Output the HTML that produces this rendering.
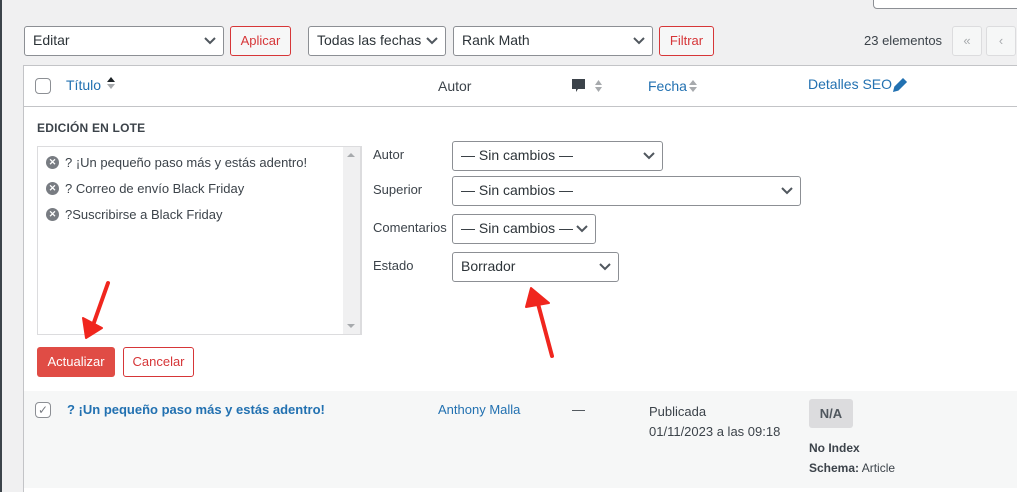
<!DOCTYPE html>
<html><head><meta charset="utf-8"><style>
*{box-sizing:border-box;margin:0;padding:0}
html,body{width:1017px;height:492px;overflow:hidden}
body{background:#f0f0f1;font-family:"Liberation Sans",sans-serif;font-size:13px;color:#3c434a;position:relative}
.a{position:absolute}
.sel{position:absolute;background:#fff;border:1px solid #8c8f94;border-radius:3px;font-size:14px;color:#2c3338;padding:0 0 0 8px;line-height:27px;white-space:nowrap}
.sel svg{position:absolute;right:7px;top:10px}
.btn{position:absolute;border:1px solid #d63638;border-radius:3px;color:#d63638;background:#f6f7f7;font-size:13px;text-align:center;line-height:27px}
.blue{color:#2271b1}
.it{display:flex;align-items:center;height:26px}
.x{display:inline-block;width:13px;height:13px;border-radius:50%;background:#787c82;color:#fff;font-size:9px;line-height:13px;text-align:center;font-weight:bold;margin-right:6px}
</style></head><body>
<div class="a" style="left:0;top:0;width:2px;height:492px;background:#3c434a"></div>
<div class="a" style="left:873px;top:-5px;width:150px;height:14px;background:#fff;border:1px solid #8c8f94;border-radius:4px"></div>

<div class="sel" style="left:24px;top:26px;width:200px;height:30px">Editar<svg width="12" height="8"><path d="M1 1l5 5 5-5" stroke="#50575e" stroke-width="2" fill="none"/></svg></div>
<div class="btn" style="left:230px;top:26px;width:61px;height:30px">Aplicar</div>
<div class="sel" style="left:308px;top:26px;width:138px;height:30px">Todas las fechas<svg width="12" height="8"><path d="M1 1l5 5 5-5" stroke="#50575e" stroke-width="2" fill="none"/></svg></div>
<div class="sel" style="left:453px;top:26px;width:200px;height:30px">Rank Math<svg width="12" height="8"><path d="M1 1l5 5 5-5" stroke="#50575e" stroke-width="2" fill="none"/></svg></div>
<div class="btn" style="left:659px;top:26px;width:55px;height:30px">Filtrar</div>
<div class="a" style="left:864px;top:33px;font-size:13px;color:#3c434a">23 elementos</div>
<div class="a" style="left:952px;top:26px;width:30px;height:30px;border:1px solid #dcdcde;border-radius:3px;background:#f6f7f7;color:#a7aaad;text-align:center;line-height:28px">«</div>
<div class="a" style="left:986px;top:26px;width:30px;height:30px;border:1px solid #dcdcde;border-radius:3px;background:#f6f7f7;color:#a7aaad;text-align:center;line-height:28px">‹</div>

<div class="a" style="left:23px;top:65px;width:994px;height:427px;background:#fff;border:1px solid #c3c4c7;border-bottom:none;border-right:none"></div>
<div class="a" style="left:24px;top:106px;width:993px;height:1px;background:#c3c4c7"></div>
<div class="a" style="left:35px;top:78px;width:16px;height:16px;border:1px solid #8c8f94;border-radius:4px;background:#fff"></div>
<div class="a blue" style="left:66px;top:77px;font-size:14px">Título</div>
<svg class="a" style="left:106px;top:76px" width="10" height="14"><path d="M1 6L5 1 9 6z" fill="#1d2327"/><path d="M1 8L5 13 9 8z" fill="#a7aaad"/></svg>
<div class="a" style="left:438px;top:78px;font-size:14px">Autor</div>
<svg class="a" style="left:571px;top:78px" width="32" height="16"><path d="M1 1h13v10H7l-2 3v-3H1z" fill="#3c434a"/><path d="M24 7L27.5 2 31 7z" fill="#a7aaad"/><path d="M24 9L27.5 14 31 9z" fill="#a7aaad"/></svg>
<div class="a blue" style="left:648px;top:78px;font-size:14px">Fecha</div>
<svg class="a" style="left:688px;top:78px" width="10" height="16"><path d="M1 7L5 2 9 7z" fill="#a7aaad"/><path d="M1 9L5 14 9 9z" fill="#a7aaad"/></svg>
<div class="a blue" style="left:808px;top:76px;font-size:14px">Detalles SEO</div>
<svg class="a" style="left:892px;top:77px" width="16" height="16"><path d="M2 14l1-4 8-8 3 3-8 8z" fill="#2271b1" stroke="#2271b1" stroke-width="1.5"/></svg>

<div class="a" style="left:37px;top:121px;font-size:12px;font-weight:bold;color:#3c434a;letter-spacing:.2px">EDICIÓN EN LOTE</div>
<div class="a" style="left:37px;top:146px;width:324px;height:189px;border:1px solid #dcdcde;background:#fff"></div>
<div class="a" style="left:343px;top:147px;width:17px;height:187px;background:#f0f0f1"></div>
<svg class="a" style="left:346px;top:151px" width="10" height="180"><path d="M1 6L5 2 9 6z" fill="#a7aaad"/><path d="M1 173L5 177 9 173z" fill="#a7aaad"/></svg>
<div class="a" style="left:46px;top:149px;font-size:13px;color:#3c434a">
<div class="it"><span class="x">✕</span>? ¡Un pequeño paso más y estás adentro!</div>
<div class="it"><span class="x">✕</span>? Correo de envío Black Friday</div>
<div class="it"><span class="x">✕</span>?Suscribirse a Black Friday</div>
</div>
<div class="a" style="left:361px;top:146px;width:1px;height:189px;background:#dcdcde"></div>
<div class="a" style="left:373px;top:147px">Autor</div>
<div class="a" style="left:373px;top:182px">Superior</div>
<div class="a" style="left:373px;top:220px">Comentarios</div>
<div class="a" style="left:373px;top:258px">Estado</div>
<div class="sel" style="left:452px;top:141px;width:211px;height:30px">— Sin cambios —<svg width="12" height="8"><path d="M1 1l5 5 5-5" stroke="#50575e" stroke-width="2" fill="none"/></svg></div>
<div class="sel" style="left:452px;top:176px;width:349px;height:30px">— Sin cambios —<svg width="12" height="8"><path d="M1 1l5 5 5-5" stroke="#50575e" stroke-width="2" fill="none"/></svg></div>
<div class="sel" style="left:452px;top:214px;width:144px;height:30px">— Sin cambios —<svg width="12" height="8"><path d="M1 1l5 5 5-5" stroke="#50575e" stroke-width="2" fill="none"/></svg></div>
<div class="sel" style="left:452px;top:252px;width:167px;height:30px">Borrador<svg width="12" height="8"><path d="M1 1l5 5 5-5" stroke="#50575e" stroke-width="2" fill="none"/></svg></div>
<div class="a" style="left:37px;top:347px;width:78px;height:30px;background:#e04c45;border-radius:3px;color:#fff;text-align:center;line-height:30px">Actualizar</div>
<div class="btn" style="left:123px;top:347px;width:71px;height:30px;background:#fff">Cancelar</div>

<svg class="a" style="left:0;top:0" width="1017" height="492">
<path d="M108 283 L92 328" stroke="#f0261e" stroke-width="4" stroke-linecap="round"/>
<path d="M83 318 L86 338 L102 328z" fill="#f0261e" stroke="#f0261e" stroke-width="2" stroke-linejoin="round"/>
<path d="M552 356 L537 300" stroke="#f0261e" stroke-width="4" stroke-linecap="round"/>
<path d="M526 307 L531 288 L549 303z" fill="#f0261e" stroke="#f0261e" stroke-width="2" stroke-linejoin="round"/>
</svg>

<div class="a" style="left:24px;top:391px;width:993px;height:97px;background:#f6f7f7"></div>
<div class="a" style="left:35px;top:402px;width:16px;height:16px;border:1px solid #8c8f94;border-radius:4px;background:#fff;color:#787c82;font-size:12px;line-height:14px;text-align:center">✓</div>
<div class="a blue" style="left:67px;top:402px;font-weight:bold">? ¡Un pequeño paso más y estás adentro!</div>
<div class="a blue" style="left:438px;top:402px">Anthony Malla</div>
<div class="a" style="left:572px;top:402px">—</div>
<div class="a" style="left:649px;top:402px;line-height:20px">Publicada<br>01/11/2023 a las 09:18</div>
<div class="a" style="left:809px;top:399px;width:44px;height:29px;background:#dcdcde;border-radius:3px;text-align:center;line-height:29px;color:#50575e;font-weight:bold">N/A</div>
<div class="a" style="left:809px;top:438px;line-height:20px;font-size:12px;color:#3c434a"><b>No Index</b><br><b>Schema:</b> Article</div>
</body></html>
